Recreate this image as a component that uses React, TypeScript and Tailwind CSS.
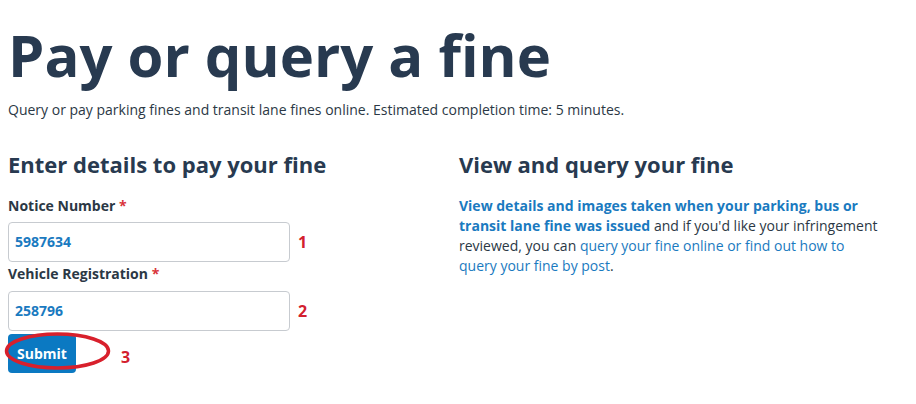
import React from "react";

export default function App() {
  return (
    <div className="min-h-screen bg-white px-2 pt-[23px] text-[#2b3845] font-['Open_Sans',sans-serif]">
      <h1 className="text-[58px] leading-[1.1] font-bold text-[#283a50]">Pay or query a fine</h1>
      <p className="mt-[13px] text-[14px] leading-5">
        Query or pay parking fines and transit lane fines online. Estimated completion time: 5 minutes.
      </p>

      <div className="mt-[30px] flex">
        <div className="w-[451px]">
          <h2 className="text-[22px] leading-7 font-bold text-[#283a50]">Enter details to pay your fine</h2>

          <form className="mt-[18px]" onSubmit={(e) => e.preventDefault()}>
            <label className="block text-[14px] leading-5 font-bold text-[#2b3845]">
              Notice Number <span className="text-[#d9343a]">*</span>
            </label>
            <div className="mt-[6px] flex items-center">
              <input
                className="w-[282px] h-[40px] rounded border border-[#c7cbd0] px-[6px] text-[14px] font-bold text-[#1a7ac0] outline-none"
                defaultValue="5987634"
              />
              <span className="ml-[8px] text-[16px] font-bold text-[#d3202e]">1</span>
            </div>

            <label className="mt-[2px] block text-[14px] leading-5 font-bold text-[#2b3845]">
              Vehicle Registration <span className="text-[#d9343a]">*</span>
            </label>
            <div className="mt-[7px] flex items-center">
              <input
                className="w-[282px] h-[40px] rounded border border-[#c7cbd0] px-[6px] text-[14px] font-bold text-[#1a7ac0] outline-none"
                defaultValue="258796"
              />
              <span className="ml-[8px] text-[16px] font-bold text-[#d3202e]">2</span>
            </div>

            <div className="mt-[3px] flex items-center">
              <div className="relative">
                <button
                  type="submit"
                  className="h-[39px] w-[68px] rounded-sm bg-[#0b79c2] text-[14px] font-bold text-white"
                >
                  Submit
                </button>
                <svg
                  className="pointer-events-none absolute left-[-4px] top-[-2px]"
                  width="108"
                  height="40"
                  viewBox="0 0 108 40"
                >
                  <ellipse cx="53.5" cy="19" rx="51" ry="17" fill="none" stroke="#d8202c" strokeWidth="3.5" />
                </svg>
              </div>
              <span className="ml-[45px] mt-[8px] text-[16px] font-bold text-[#d3202e]">3</span>
            </div>
          </form>
        </div>

        <div className="flex-1 pr-4">
          <h2 className="text-[22px] leading-7 font-bold text-[#283a50]">View and query your fine</h2>
          <p className="mt-[18px] w-[422px] text-[14px] leading-5 text-[#2b3845]">
            <a href="#" className="font-bold text-[#1a7ac0]">
              View details and images taken when your parking, bus or transit lane fine was issued
            </a>{" "}
            and if you'd like your infringement reviewed, you can{" "}
            <a href="#" className="text-[#1a7ac0]">
              query your fine online or find out how to query your fine by post
            </a>
            .
          </p>
        </div>
      </div>
    </div>
  );
}
